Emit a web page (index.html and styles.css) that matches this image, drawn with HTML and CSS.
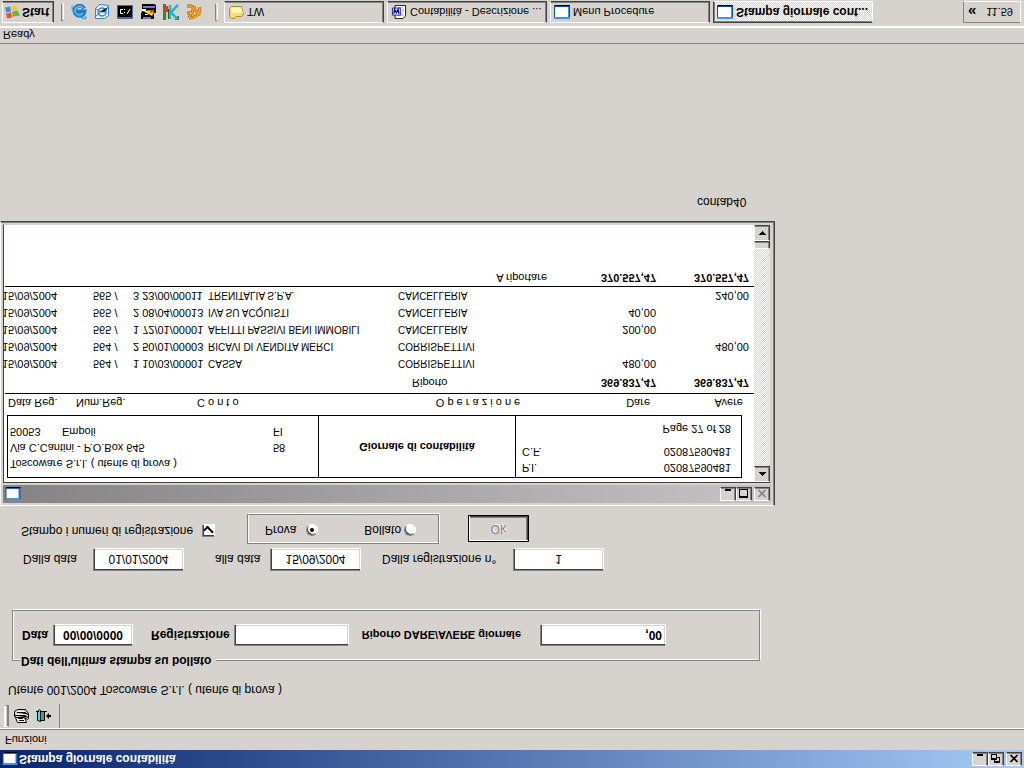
FILE: index.html
```html
<!DOCTYPE html>
<html lang="it">
<head>
<meta charset="utf-8">
<title>Stampa giornale contabilità</title>
<link rel="stylesheet" href="styles.css">
</head>
<body>
<svg class="defs" width="0" height="0" aria-hidden="true">
  <symbol id="i-win" viewBox="0 0 16 14"><path fill="#0a4aa8" d="M0 0h16v14H0z"/><path fill="#3a94f0" d="M0 0h16v2H0zM14 2h1v10h-1z"/><path fill="#fff" d="M1 2h13v10H1z"/><path fill="#000" d="M1 13h15v1H1z"/></symbol>
  <symbol id="i-min" viewBox="0 0 10 9"><path d="M2 7h6v2H2z"/></symbol>
  <symbol id="i-max" viewBox="0 0 10 9"><path fill-rule="evenodd" d="M0 0h9v9H0zM1 2v6h7V2z"/></symbol>
  <symbol id="i-restore" viewBox="0 0 10 9"><path fill-rule="evenodd" d="M3 0h6v6H6v3H0V3h3zM4 2v1h2v2h2V2zM1 5v3h4V5z"/></symbol>
  <symbol id="i-x" viewBox="0 0 10 9"><path fill="none" stroke="currentColor" stroke-width="1.7" d="M1.500 1l7 7M8.500 1l-7 7"/></symbol>
</svg>
<div class="desktop">
  <main class="app">
    <header class="titlebar">
      <svg class="win-icon" aria-hidden="true"><use href="#i-win"/></svg>
      <h1 class="title">Stampa giornale contabilità</h1>
      <div class="controls">
        <button class="ctl" aria-label="Riduci"><svg><use href="#i-min"/></svg></button>
        <button class="ctl" aria-label="Ripristina"><svg><use href="#i-restore"/></svg></button>
        <button class="ctl ctl-close" aria-label="Chiudi"><svg><use href="#i-x"/></svg></button>
      </div>
    </header>
    <nav class="menubar"><button class="menu">Funzioni</button></nav>
    <div class="toolbar">
      <span class="grip"></span>
      <button class="tool" aria-label="Stampa"><svg viewBox="0 0 16 16"><path fill="#fff" stroke="#000" d="M4.500 1.500h9l-2 5h-9z"/><path stroke="#000" d="M6 3.500h5M5 5.500h5"/><path fill="#d6d3ce" stroke="#000" d="M1.500 7.500l2-1h8l3-2 1 1v5l-3 4h-8l-3-2z"/><path stroke="#000" d="M2 8.500h10l3-2M4 11.500h8l3-2"/><path stroke="#fff" d="M3 9.500h9M4 12.500h7"/></svg></button>
      <button class="tool" aria-label="Esci"><svg viewBox="0 0 16 16"><path fill="#848284" stroke="#000" d="M3.500 3.500h5v9h-5z"/><path fill="#0ff" stroke="#000" d="M1.500 3.500l3-1v11l-1 1-2-2z"/><path d="M0 12h3v1H0zM8 12h3v1H8zM10 8l3-3v2h2v2h-2v2z"/></svg></button>
      <span class="tool-end"></span>
    </div>
    <div class="form">
      <p class="user">Utente 001/2004 Toscoware S.r.l. ( utente di prova )</p>
      <fieldset class="group last">
        <legend>Dati dell'ultima stampa su bollato</legend>
        <label for="l-data">Data</label><input id="l-data" class="field w80" value="00/00/0000">
        <label for="l-reg">Registrazione</label><input id="l-reg" class="field w115" value="">
        <label for="l-rip" class="small">Riporto DARE/AVERE giornale</label><input id="l-rip" class="field w126" value=",00">
      </fieldset>
      <div class="line dates">
        <label for="d1">Dalla data</label><input id="d1" class="field w91" value="01/01/2004">
        <label for="d2">alla data</label><input id="d2" class="field w91" value="15/09/2004">
        <label for="d3">Dalla registrazione n°</label><input id="d3" class="field w91" value="1">
      </div>
      <div class="line options">
        <div class="line print-numbers"><label for="num">Stampo i numeri di registrazione</label><input id="num" class="check" type="checkbox" checked></div>
        <div class="group radios" role="radiogroup" aria-label="Tipo di stampa">
          <label for="r1">Prova</label><input id="r1" class="radio" type="radio" name="tipo" checked>
          <label for="r2">Bollato</label><input id="r2" class="radio" type="radio" name="tipo">
        </div>
        <button class="ok" disabled>Ok</button>
      </div>
    </div>
    <section class="child">
      <header class="titlebar inactive">
        <svg class="win-icon" aria-hidden="true"><use href="#i-win"/></svg>
        <div class="controls">
          <button class="ctl" aria-label="Riduci"><svg><use href="#i-min"/></svg></button>
          <button class="ctl" aria-label="Ingrandisci"><svg><use href="#i-max"/></svg></button>
          <button class="ctl ctl-close" disabled aria-label="Chiudi"><svg><use href="#i-x"/></svg></button>
        </div>
      </header>
      <div class="viewer">
        <article class="report">
          <div class="letterhead">
            <div class="company">
              <span class="wide">Toscoware S.r.l. ( utente di prova )</span>
              <span class="street">Via C.Cantini - P.O.Box 645</span><span>58</span>
              <span>50053</span><span>Empoli</span><span>FI</span>
            </div>
            <h2 class="doc-title">Giornale di contabilità</h2>
            <div class="fiscal">
              <span>P.I.</span><span>02087590481</span>
              <span>C.F.</span><span>02087590481</span>
              <span class="page">Page 27 of 28</span>
            </div>
          </div>
          <table class="ledger">
            <colgroup><col class="c-date"><col class="c-num"><col class="c-code"><col class="c-name"><col class="c-op"><col class="c-amt"><col class="c-amt2"></colgroup>
            <thead>
              <tr><th class="h-date">Data Reg.</th><th>Num.Reg.</th><th colspan="2" class="h-conto">C o n t o</th><th class="h-op">O p e r a z i o n e</th><th class="h-amt">Dare</th><th class="h-amt">Avere</th></tr>
            </thead>
            <tbody>
              <tr class="carry"><td colspan="4"></td><td class="riporto">Riporto</td><td class="amt total">369.837,47</td><td class="amt total">369.837,47</td></tr>
              <tr><td class="date">15/09/2004</td><td class="num">564 /</td><td>1 10/03/00001</td><td class="desc">CASSA</td><td class="desc">CORRISPETTIVI</td><td class="amt">480,00</td><td></td></tr>
              <tr><td class="date">15/09/2004</td><td class="num">564 /</td><td>2 50/01/00003</td><td class="desc">RICAVI DI VENDITA MERCI</td><td class="desc">CORRISPETTIVI</td><td></td><td class="amt">480,00</td></tr>
              <tr><td class="date">15/09/2004</td><td class="num">565 /</td><td>1 72/01/00001</td><td class="desc">AFFITTI PASSIVI BENI IMMOBILI</td><td class="desc">CANCELLERIA</td><td class="amt">200,00</td><td></td></tr>
              <tr><td class="date">15/09/2004</td><td class="num">565 /</td><td>2 08/04/00013</td><td class="desc">IVA SU ACQUISTI</td><td class="desc">CANCELLERIA</td><td class="amt">40,00</td><td></td></tr>
              <tr><td class="date">15/09/2004</td><td class="num">565 /</td><td>3 23/00/00011</td><td class="desc">TRENITALIA S.P.A.</td><td class="desc">CANCELLERIA</td><td></td><td class="amt">240,00</td></tr>
            </tbody>
            <tfoot>
              <tr><td colspan="4"></td><td class="riportare">A riportare</td><td class="amt total">370.557,47</td><td class="amt total">370.557,47</td></tr>
            </tfoot>
          </table>
        </article>
        <div class="scroll">
          <button class="arrow" aria-label="Su"><svg viewBox="0 0 7 4"><path d="M3 0h1v1h1v1h1v1h1v1H0V3h1V2h1V1h1z"/></svg></button>
          <div class="track"><div class="thumb"></div></div>
          <button class="arrow" aria-label="Giù"><svg viewBox="0 0 7 4"><path d="M0 0h7v1H6v1H5v1H4v1H3V3H2V2H1V1H0z"/></svg></button>
        </div>
      </div>
    </section>
    <p class="program">contab40</p>
    <footer class="status">Ready</footer>
  </main>
  <nav class="taskbar">
    <button class="task start"><svg viewBox="0 0 16 14"><path fill="#e8562a" d="M2 1q3-1 5 1L6 7Q4 5 1 6z"/><path fill="#6cb33e" d="M8 2q3 2 7 1l-2 5q-3 1-6-1z"/><path fill="#4a86e8" d="M1 7q3-1 5 1l-1 5q-2-2-5-1z"/><path fill="#f8c820" d="M7 8q3 2 6 1l-1 4q-3 1-6-1z"/></svg>Start</button>
    <span class="divider"></span>
    <div class="quick">
      <button class="ql" aria-label="Internet Explorer"><svg viewBox="0 0 16 16"><path fill="none" stroke="#1a7ccc" stroke-width="4" d="M13 11.500a5 5 0 1 1 .500-3H5"/><path fill="none" stroke="#62c0f8" stroke-width="1.500" d="M12 12a4.500 4.500 0 0 1-8-3c0-3 5-6 8-2"/><path fill="none" stroke="#3a9ae0" stroke-width="1.300" d="M2 14C-1 13 3 6 9 3s7-1 5 1"/></svg></button>
      <button class="ql" aria-label="Outlook Express"><svg viewBox="0 0 16 16"><path fill="#e8f4ff" stroke="#2a84d8" d="M1.500 1.500h9l4 3v10l-9 1-4-4z"/><circle cx="8" cy="8" r="4" fill="none" stroke="#2a84d8" stroke-width="1.500"/><path stroke="#2a84d8" d="M5 8h6l3 5M2 4l4 3M2 11l4-2"/></svg></button>
      <button class="ql" aria-label="Prompt dei comandi"><svg viewBox="0 0 16 16"><path fill="#4a6a94" d="M0 1h16v14H0z"/><path d="M1 3h14v11H1z"/><path fill="none" stroke="#fff" d="M6 6.500H3.500v4H6M7.500 7v1M7.500 10v1M10 6l3 5"/></svg></button>
      <button class="ql" aria-label="Strumenti"><svg viewBox="0 0 16 16"><path d="M1 1h13v6h2v8l-2 1H2V8L1 7z"/><path fill="#7878cc" d="M3 1h8v2H3zM3 12h12v2H3z"/><path fill="#ffe020" d="M12 4l-9 5 9 1 2-2z"/><path fill="#e04030" d="M10 7l4 1v2h-4z"/><path fill="#fff" d="M2 9h4v2H2zM5 5h3v1H5z"/></svg></button>
      <button class="ql" aria-label="Kit"><svg viewBox="0 0 16 16"><path fill="#208090" d="M0 0h3v16H0zM12 0h4v4h-4z"/><path fill="#f0d040" d="M3 2h4v12H3zM11 1h3v3h-3z"/><path fill="#d04030" d="M1 8h4v6H1z"/><path fill="none" stroke="#28b0d8" stroke-width="2.500" d="M7 1v14M14 1L8 8l7 7"/><path fill="#206020" d="M5 1h1v10H5z"/></svg></button>
      <button class="ql" aria-label="Timone"><svg viewBox="0 0 16 16"><g fill="none" stroke="#a05a00" stroke-width="2.800"><path d="M1 14h4l9-9M3 2l6 12M1 7h7M3 2c7 0 11 4 11 11"/></g><g fill="none" stroke="#ffa818" stroke-width="1.600"><path d="M1 14h4l9-9M3 2l6 12M1 7h7M3 2c7 0 11 4 11 11"/></g></svg></button>
    </div>
    <span class="divider"></span>
    <div class="tasks">
      <button class="task"><svg viewBox="0 0 16 14"><path fill="#f8dc70" stroke="#b88820" d="M1.500 2.500l2-2h3l2 2h5l2 2-2 8h-10l-2-2z"/><path fill="#fff6b8" d="M4 6h11l-2 6H3z"/></svg><span>TW</span></button>
      <button class="task"><svg viewBox="0 0 16 16"><path fill="#fff" stroke="#000" d="M3.500.500h9l3 3v12h-12z"/><path stroke="#aaa" d="M6 4h7M6 6h7M11 9h3M11 11h3M6 13h7"/><path fill="#fff" stroke="#0a0a90" d="M.500 4.500h9v8h-9z"/><path fill="none" stroke="#0a0a90" stroke-width="1.500" d="M2 6l1 5 2-4 2 4 1-5"/></svg><span>Contabilità - Descrizione ...</span></button>
      <button class="task"><svg><use href="#i-win"/></svg><span>Menu Procedure</span></button>
      <button class="task active"><svg><use href="#i-win"/></svg><span>Stampa giornale cont...</span></button>
    </div>
    <div class="tray"><button class="more" aria-label="Mostra icone nascoste">«</button><time>11.59</time></div>
  </nav>
</div>
</body>
</html>
```

FILE: styles.css
```css
* { box-sizing: border-box; }
body { margin: 0; background: #d6d3ce; }
body, button, input { font-family: "Liberation Sans", Arial, sans-serif; font-size: 12px; line-height: 14px; color: #000; }
h1, h2, p { margin: 0; font-size: 12px; }
button { padding: 0; background: #d6d3ce; border: 0; }
svg { display: block; flex: none; }
.defs { position: absolute; }

.desktop { display: flex; flex-direction: column; min-height: 100vh; transform: scaleY(-1); background: #d6d3ce; white-space: nowrap; overflow: hidden; }
.app { flex: 1; display: flex; flex-direction: column; }

.titlebar { display: flex; align-items: center; height: 18px; padding: 0 2px; background: linear-gradient(90deg, #08246b, #a5cbf7); color: #fff; }
.win-icon { width: 16px; height: 13px; }
.title { margin-left: 1px; font-weight: bold; color: #fff; }
.controls { display: flex; margin-left: auto; }
.ctl { display: grid; place-items: center; width: 16px; height: 14px; border: 1px solid; border-color: #fff #424142 #424142 #fff; box-shadow: inset -1px -1px 0 #848284; }
.ctl svg { width: 10px; height: 9px; }
.ctl-close { margin-left: 2px; }
.ctl:disabled { color: #848284; }

.menubar { height: 21px; padding: 3px 5px; border-bottom: 1px solid #848284; }
.menu { font-size: 11px; display: block; }
.toolbar { display: flex; align-items: center; gap: 7px; height: 25px; padding-left: 4px; border-top: 1px solid #fff; }
.grip { width: 5px; height: 22px; border: 1px solid; border-color: #fff #848284 #848284 #fff; border-width: 1px 2px; margin-right: -3px; }
.tool svg { width: 16px; height: 16px; }
.tool-end { width: 1px; height: 24px; background: #848284; }

.form { padding: 7px 8px 0; }
.group { border: 1px solid #848284; box-shadow: 1px 1px 0 #fff, inset 1px 1px 0 #fff; }
.last { display: flex; align-items: center; width: 748px; max-width: 100%; height: 58px; margin: 15px 0 0 4px; padding: 0 0 6px 9px; font-weight: bold; }
.last legend { margin-left: -2px; padding: 0 5px 0 1px; background: #d6d3ce; }
.last .small { font-size: 11px; }
.field { height: 23px; padding: 1px 3px; border: 1px solid; border-color: #848284 #fff #fff #848284; box-shadow: inset 1px 1px 0 #424142, inset -1px -1px 0 #d6d3ce; background: #fff; text-align: center; border-radius: 0; }
.last .field { font-weight: bold; height: 22px; }
.w80 { width: 80px; margin: 0 18px 0 5px; }
.w115 { width: 115px; margin: 0 13px 0 4px; }
.w126 { width: 126px; margin-left: 19px; }
.last .w126 { text-align: right; }
.w91 { width: 91px; }
.line { display: flex; align-items: center; }
.dates { margin-top: 39px; padding-left: 15px; }
.dates label:nth-of-type(1) { width: 70px; }
.dates label:nth-of-type(2) { width: 55px; margin-left: 31px; }
.dates label:nth-of-type(3) { width: 131px; margin-left: 21px; }
.options { margin-top: 4px; padding-left: 13px; }
.print-numbers { padding-bottom: 4px; }
.print-numbers label { width: 181px; }
.check, .radio { appearance: none; margin: 0; width: 13px; height: 13px; background: #fff; border: 1px solid; border-color: #848284 #fff #fff #848284; box-shadow: inset 1px 1px 0 #424142; display: grid; place-items: center; }
.check:checked::before { content: ""; width: 7px; height: 4px; border: solid #000; border-width: 0 0 2px 2px; transform: rotate(-45deg); }
.radio { border-radius: 50%; width: 12px; height: 12px; }
.radio:checked::before { content: ""; width: 4px; height: 4px; border-radius: 50%; background: #000; }
.radios { display: flex; align-items: center; width: 192px; height: 30px; margin-left: 32px; padding: 0 0 2px 17px; }
#r1 { margin: 0 46px 0 10px; }
#r2 { margin-left: 3px; }
.ok { width: 61px; height: 27px; margin-left: 29px; border: 1px solid #000; box-shadow: inset 1px 1px 0 #fff, inset -1px -1px 0 #424142, inset -2px -2px 0 #848284; color: #848284; text-shadow: 1px 1px 0 #fff; }

.child { width: 775px; max-width: 100%; margin-top: 8px; padding: 2px 3px 2px 2px; border: 1px solid; border-color: #fff #424142 #424142 #fff; box-shadow: inset -1px -1px 0 #848284; }
.inactive { padding: 0 1px 0 2px; background: linear-gradient(90deg, #848284, #c6c3c6); }
.viewer { display: flex; margin-top: 2px; height: 259px; border: 1px solid #424142; border-color: #424142 #d6d3ce #d6d3ce #424142; background: #fff; font-size: 11px; }
.report { flex: 1; min-width: 0; padding: 4px 0 0 1px; overflow: hidden; }
.letterhead { display: grid; grid-template-columns: 310px 198px 1fr; height: 63px; margin: 0 12px 0 2px; border: 1px solid #000; }
.company { display: grid; grid-template-columns: 52px 211px 1fr; grid-auto-rows: 16px; padding: 5px 2px; line-height: 16px; }
.wide { grid-column: span 3; }
.street { grid-column: span 2; }
.doc-title { display: grid; place-items: center; padding-bottom: 2px; border: solid #000; border-width: 0 1px; font-size: 11px; font-weight: bold; }
.fiscal { display: grid; grid-template-columns: 1fr auto; grid-template-rows: 16px 16px 24px; padding: 1px 10px 0 6px; line-height: 16px; }
.page { grid-column: span 2; text-align: right; padding-top: 7px; }
.ledger { width: 100%; table-layout: fixed; border-collapse: collapse; margin-top: 4px; line-height: 17px; }
.ledger th, .ledger td { padding: 0; height: 17px; font-weight: normal; text-align: left; }
.c-date { width: 71px; } .c-num { width: 57px; } .c-code { width: 75px; } .c-name { width: 190px; } .c-op { width: 160px; } .c-amt { width: 98px; }
.ledger thead th { border-bottom: 1px solid #000; }
.ledger .h-date { padding-left: 3px; }
.ledger .h-conto { padding-left: 64px; }
.ledger .h-op { text-align: center; }
.ledger .h-amt { text-align: right; padding-right: 6px; }
.ledger th.h-amt:last-child { padding-right: 11px; }
.ledger td.date { text-indent: -3px; }
.ledger td.num { padding-left: 17px; }
.ledger td.desc { font-size: 10px; }
.ledger td.amt { text-align: right; }
.ledger td.amt:last-child { padding-right: 5px; }
.ledger td.total { font-weight: bold; }
.ledger .carry td { height: 21px; }
.ledger td.riporto { padding-left: 14px; }
.ledger td.riportare { text-align: right; padding-right: 11px; }
.ledger tfoot td { border-top: 1px solid #000; }
.scroll { display: flex; flex-direction: column; width: 16px; }
.arrow, .thumb { background: #d6d3ce; border: 1px solid; border-color: #fff #424142 #424142 #fff; box-shadow: inset -1px -1px 0 #848284; }
.arrow { display: grid; place-items: center; height: 16px; }
.arrow svg { width: 7px; height: 4px; }
.track { flex: 1; display: flex; align-items: flex-end; background: repeating-conic-gradient(#fff 0 25%, #d6d3ce 0 50%) 0 0 / 2px 2px; }
.thumb { width: 16px; height: 8px; }

.program { margin: 12px 0 auto 697px; }
.status { height: 17px; padding: 1px 3px; border-top: 1px solid #848284; border-bottom: 1px solid #fff; font-size: 11px; }

.taskbar { display: flex; align-items: center; height: 27px; padding: 2px 3px 1px 2px; border-top: 1px solid #fff; }
.task { display: flex; align-items: center; gap: 3px; height: 22px; padding: 0 3px; border: 1px solid; border-color: #fff #424142 #424142 #fff; box-shadow: inset -1px -1px 0 #848284; }
.task svg { width: 16px; height: 14px; }
.start { width: 52px; gap: 1px; padding: 0 2px; font-weight: bold; }
.divider { width: 3px; height: 18px; margin: 0 7px; border: 1px solid; border-color: #848284 #fff #fff #848284; }
.quick { display: flex; gap: 7px; margin-right: 6px; }
.ql svg { width: 16px; height: 16px; }
.tasks { flex: 1; display: flex; gap: 3px; min-width: 0; margin-left: -1px; }
.tasks .task { flex: 0 1 160px; min-width: 0; overflow: hidden; font-size: 11px; }
.tasks .active { font-size: 12px; font-weight: bold; border-color: #424142 #fff #fff #424142; box-shadow: inset 1px 1px 0 #848284; background: repeating-conic-gradient(#fff 0 25%, #d6d3ce 0 50%) 0 0 / 2px 2px; }
.tray { display: flex; align-items: center; justify-content: space-between; width: 58px; height: 22px; padding: 0 7px 0 4px; border: 1px solid; border-color: #848284 #fff #fff #848284; font-size: 11px; }
.more { font-size: 15px; font-weight: bold; }
```
